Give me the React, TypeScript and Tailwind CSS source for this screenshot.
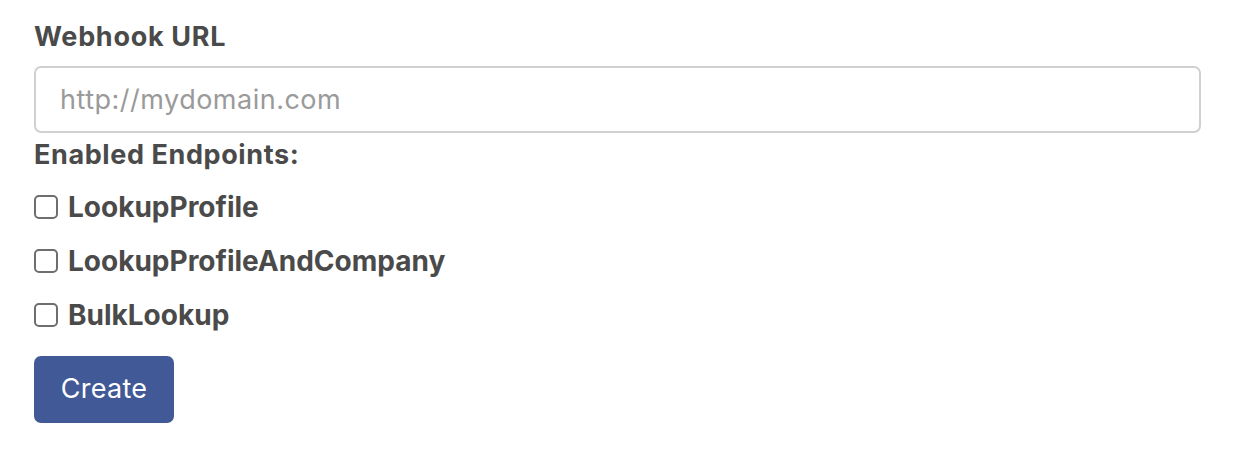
import React from "react";

const endpoints = ["LookupProfile", "LookupProfileAndCompany", "BulkLookup"];

export default function App() {
  return (
    <div className="w-[1236px] h-[454px] bg-white px-[34px] pt-[20px] text-[#4a4a4a]" style={{ fontFamily: "Inter, 'Noto Sans', sans-serif" }}>
      <label className="block text-[27px] font-bold leading-[34px] tracking-[0.7px]">Webhook URL</label>
      <input
        type="text"
        placeholder="http://mydomain.com"
        className="mt-[12px] block w-[1167px] h-[67px] rounded-[7px] border-2 border-[#d0d0d0] px-[24px] text-[27px] text-[#333] placeholder:text-[#9a9a9a] outline-none tracking-[0.5px]"
      />
      <div className="mt-[5px] text-[27px] font-bold leading-[34px] tracking-[0.6px]">Enabled Endpoints:</div>
      <div className="mt-[18px] flex flex-col gap-[20px]">
        {endpoints.map((e) => (
          <label key={e} className="flex items-center gap-[10px] text-[28px] font-bold leading-[34px]">
            <span className="w-[24px] h-[24px] rounded-[5px] border-2 border-[#6e6e6e] bg-white" />
            {e}
          </label>
        ))}
      </div>
      <button className="mt-[24px] w-[140px] h-[67px] rounded-[7px] bg-[#415996] text-white text-[27px] tracking-[0.3px]">Create</button>
    </div>
  );
}
